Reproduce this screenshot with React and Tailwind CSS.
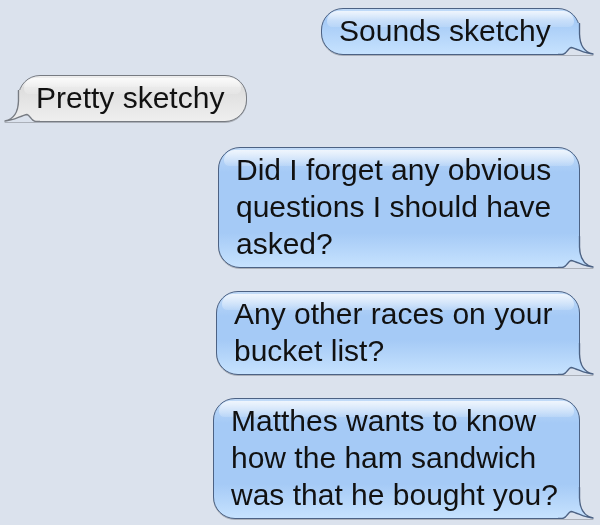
import React, { useId } from 'react'

const blue = {
  box: 'border-[#4c6284] bg-[linear-gradient(to_top,#c6e2fe_0px,#a5caf6_34px,#a5caf6_calc(100%_-_24px),#c2dbf8_100%)]',
  from: '#c6e2fe',
  to: '#a5caf6',
  line: '#4c6284',
}

const gray = {
  box: 'border-[#777b82] bg-[linear-gradient(to_top,#efefef_0px,#dddddd_34px,#e1e1e1_calc(100%_-_24px),#eeeeee_100%)]',
  from: '#efefef',
  to: '#dddddd',
  line: '#777b82',
}

// tail drawn over the square bottom corner of the bubble
function Tail({ from, to, line, left }) {
  const id = useId()
  return (
    <svg
      width="42"
      height="32"
      viewBox="0 0 42 32"
      className={left ? 'absolute bottom-0 left-[-20px] -scale-x-100' : 'absolute bottom-0 right-[-20px]'}
    >
      <defs>
        <linearGradient id={id} gradientUnits="userSpaceOnUse" x1="0" y1="31" x2="0" y2="-3">
          <stop offset="0" stopColor={from} />
          <stop offset="1" stopColor={to} />
        </linearGradient>
      </defs>
      <path d="M4 31.5 C8.5 31.5 10 25 13 24.5 C19 25.5 27 31 35 31 L35 32.5 L4 32.5 Z" fill="#dbe2ed" />
      <path
        d="M19 0 L21.5 0 L21.5 11 C21.8 21 25.5 29 35 31 C27 31 19 25.5 13 24.5 L12 20 Z"
        fill={`url(#${id})`}
      />
      <path
        d="M0 31.5 L4 31.5 C8.5 31.5 10 25 13 24.5 C19 25.5 27 31 35 31 C25.5 29 21.8 21 21.5 11 L21.5 0"
        fill="none"
        stroke={line}
        strokeWidth="1.3"
        strokeLinejoin="round"
      />
    </svg>
  )
}

function Bubble({ lines, mine, className }) {
  const t = mine ? blue : gray
  return (
    <div className={`relative drop-shadow-[0_1px_0_rgba(0,0,0,0.22)] ${className}`}>
      <div
        className={`relative border rounded-[22px] ${mine ? 'rounded-br-none' : 'rounded-bl-none'} ${t.box} pl-[17px] pt-[3px] pb-[5px] text-[30px] leading-[37px] text-[#111] whitespace-nowrap`}
      >
        <div className="absolute top-[2px] left-[5px] right-[5px] h-[16px] rounded-t-[20px] rounded-b-[10px] bg-linear-to-b from-white/75 to-white/15" />
        <div className="relative">
          {lines.map((l) => (
            <div key={l}>{l}</div>
          ))}
        </div>
      </div>
      <Tail from={t.from} to={t.to} line={t.line} left={!mine} />
    </div>
  )
}

export default function App() {
  return (
    <div className="w-[600px] h-[525px] overflow-hidden bg-[#dbe2ed] font-['Liberation_Sans',Arial,sans-serif] pt-[8px] flex flex-col">
      <Bubble mine className="self-end mr-[20px] w-[259px]" lines={['Sounds sketchy']} />
      <Bubble className="self-start ml-[18px] mt-[20px] w-[229px]" lines={['Pretty sketchy']} />
      <Bubble
        mine
        className="self-end mr-[20px] mt-[25px] w-[362px]"
        lines={['Did I forget any obvious', 'questions I should have', 'asked?']}
      />
      <Bubble
        mine
        className="self-end mr-[20px] mt-[23px] w-[364px]"
        lines={['Any other races on your', 'bucket list?']}
      />
      <Bubble
        mine
        className="self-end mr-[20px] mt-[23px] w-[367px]"
        lines={['Matthes wants to know', 'how the ham sandwich', 'was that he bought you?']}
      />
    </div>
  )
}
